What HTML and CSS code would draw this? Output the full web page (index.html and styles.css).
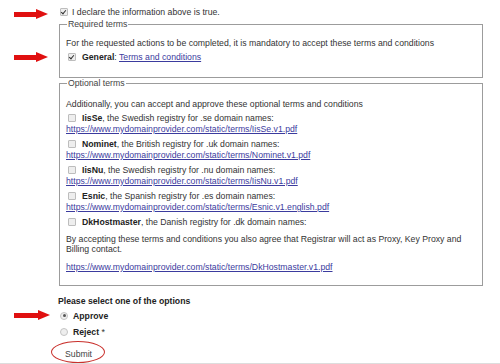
FILE: index.html
```html
<!DOCTYPE html>
<html>
<head>
<meta charset="utf-8">
<link rel="stylesheet" href="styles.css">
</head>
<body>
<div class="page">
  <div class="declare">
    <span class="cb checked"></span>
    <span>I declare the information above is true.</span>
  </div>

  <fieldset class="box required">
    <legend>Required terms</legend>
    <p class="intro">For the requested actions to be completed, it is mandatory to accept these terms and conditions</p>
    <div class="term">
      <div class="term-line"><span class="cb checked"></span><b>General</b>: <a href="#">Terms and conditions</a></div>
    </div>
  </fieldset>

  <fieldset class="box optional">
    <legend>Optional terms</legend>
    <p class="intro">Additionally, you can accept and approve these optional terms and conditions</p>
    <div class="term">
      <div class="term-line"><span class="cb"></span><b>IisSe</b>, the Swedish registry for .se domain names:</div>
      <a href="#">https://www.mydomainprovider.com/static/terms/IisSe.v1.pdf</a>
    </div>
    <div class="term">
      <div class="term-line"><span class="cb"></span><b>Nominet</b>, the British registry for .uk domain names:</div>
      <a href="#">https://www.mydomainprovider.com/static/terms/Nominet.v1.pdf</a>
    </div>
    <div class="term">
      <div class="term-line"><span class="cb"></span><b>IisNu</b>, the Swedish registry for .nu domain names:</div>
      <a href="#">https://www.mydomainprovider.com/static/terms/IisNu.v1.pdf</a>
    </div>
    <div class="term">
      <div class="term-line"><span class="cb"></span><b>Esnic</b>, the Spanish registry for .es domain names:</div>
      <a href="#">https://www.mydomainprovider.com/static/terms/Esnic.v1.english.pdf</a>
    </div>
    <div class="term">
      <div class="term-line"><span class="cb"></span><b>DkHostmaster</b>, the Danish registry for .dk domain names:</div>
    </div>
    <p class="proxy">By accepting these terms and conditions you also agree that Registrar will act as Proxy, Key Proxy and Billing contact.</p>
    <a class="dk-link" href="#">https://www.mydomainprovider.com/static/terms/DkHostmaster.v1.pdf</a>
  </fieldset>

  <div class="options">
    <p class="options-title">Please select one of the options</p>
    <div class="radio-line first"><span class="rb on"></span><span><b>Approve</b></span></div>
    <div class="radio-line"><span class="rb"></span><span><b>Reject</b> *</span></div>
  </div>

  <div class="submit-row">
    <span class="submit">Submit</span>
    <span class="ring"></span>
  </div>

  <span class="arrow a1"></span>
  <span class="arrow a2"></span>
  <span class="arrow a3"></span>
</div>
</body>
</html>
```

FILE: styles.css
```css
html, body {
  margin: 0;
  padding: 0;
  background: #fff;
}
body {
  font-family: "Liberation Sans", Arial, sans-serif;
  font-size: 8.7px;
  line-height: 10px;
  color: #333;
  width: 500px;
  height: 364px;
  overflow: hidden;
}
.page {
  position: relative;
  padding-top: 7px;
  height: 356px;
  border-bottom: 1px solid #ddd;
}
p { margin: 0; }
b { color: #222; }
a { color: #3b3b9e; text-decoration: underline; }

.cb {
  display: inline-block;
  width: 6px;
  height: 6px;
  border: 1px solid #bdbdbd;
  background: #eee;
  border-radius: 1px;
  vertical-align: -1px;
  margin-right: 5px;
  position: relative;
}
.cb.checked::after {
  content: "";
  position: absolute;
  left: 1px;
  top: 0px;
  width: 2px;
  height: 4px;
  border: solid #333;
  border-width: 0 1.5px 1.5px 0;
  transform: rotate(40deg);
}

.declare {
  margin-left: 60px;
  display: flex;
  align-items: center;
  height: 10px;
}
.declare .cb { margin-right: 4px; }

.box {
  margin: 0 0 0 59px;
  width: 424px;
  box-sizing: border-box;
  border: 1px solid #9c9c9c;
  padding: 0 6px;
}
.box legend {
  padding: 0 1px;
  margin-left: 1px;
  line-height: 10px;
  color: #444;
}
.required {
  margin-top: 2px;
  padding-bottom: 15px;
}
.required .intro { margin-top: 9px; }
.required .term { margin-top: 4px; }

.term-line { padding-left: 2px; }
.term-line .cb { margin-right: 6px; }

.optional {
  margin-top: 0;
  padding-bottom: 13px;
}
.optional .intro { margin-top: 11px; }
.optional .term { margin-top: 4px; }
.optional .term + .term { margin-top: 5px; }
.optional .term a { display: block; margin-top: 1px; }
.proxy { margin-top: 7px; }
.dk-link { display: block; margin-top: 8px; }

.options {
  margin: 10px 0 0 58px;
}
.options-title { font-weight: bold; color: #222; }
.radio-line {
  margin-top: 5px;
  padding-left: 2px;
  display: flex;
  align-items: center;
  height: 11px;
}
.radio-line.first { margin-top: 4px; }
.rb {
  width: 6px;
  height: 6px;
  border: 1px solid #c4c4c4;
  background: #eee;
  border-radius: 50%;
  margin-right: 5px;
  position: relative;
}
.rb.on::after {
  content: "";
  position: absolute;
  left: 1.5px;
  top: 1.5px;
  width: 3px;
  height: 3px;
  border-radius: 50%;
  background: #555;
}

.submit-row {
  position: relative;
  margin: 12px 0 0 65px;
  height: 12px;
}
.submit { color: #444; }
.ring {
  position: absolute;
  left: -14px;
  top: -8px;
  width: 52px;
  height: 20px;
  border: 1.5px solid #c9302c;
  border-radius: 50%;
}

.arrow {
  position: absolute;
  left: 14px;
  width: 34px;
  height: 11px;
}
.arrow::before {
  content: "";
  position: absolute;
  left: 0;
  top: 3px;
  width: 23px;
  height: 5px;
  background: #e01010;
}
.arrow::after {
  content: "";
  position: absolute;
  left: 22px;
  top: 0;
  border-left: 12px solid #e01010;
  border-top: 5.5px solid transparent;
  border-bottom: 5.5px solid transparent;
}
.a1 { top: 9px; }
.a2 { top: 52px; }
.a3 { top: 310px; width: 37px; }
.a3::before { width: 25px; }
.a3::after { left: 24px; }
```
